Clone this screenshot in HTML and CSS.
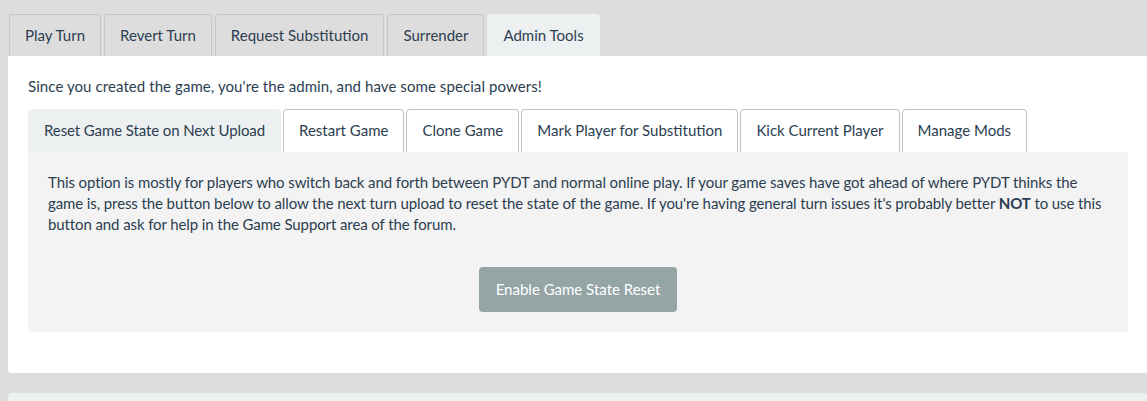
FILE: index.html
```html
<!DOCTYPE html>
<html lang="en">
<head>
  <meta charset="UTF-8">
  <meta name="viewport" content="width=device-width, initial-scale=1.0">
  <title>Game</title>
  <link rel="stylesheet" href="styles.css">
</head>
<body>
  <div class="page">
    <ul class="tabs top-tabs">
      <li><a>Play Turn</a></li>
      <li><a>Revert Turn</a></li>
      <li><a>Request Substitution</a></li>
      <li><a>Surrender</a></li>
      <li class="active"><a>Admin Tools</a></li>
    </ul>
    <div class="panel">
      <p class="intro">Since you created the game, you're the admin, and have some special powers!</p>
      <ul class="tabs inner-tabs">
        <li class="active"><a>Reset Game State on Next Upload</a></li>
        <li><a>Restart Game</a></li>
        <li><a>Clone Game</a></li>
        <li><a>Mark Player for Substitution</a></li>
        <li><a>Kick Current Player</a></li>
        <li><a>Manage Mods</a></li>
      </ul>
      <div class="tab-content">
        <p>This option is mostly for players who switch back and forth between PYDT and normal online play. If your game saves have got ahead of where PYDT thinks the game is, press the button below to allow the next turn upload to reset the state of the game. If you're having general turn issues it's probably better <strong>NOT</strong> to use this button and ask for help in the Game Support area of the forum.</p>
        <div class="actions">
          <button class="btn">Enable Game State Reset</button>
        </div>
      </div>
    </div>
    <div class="panel next"></div>
  </div>
</body>
</html>
```

FILE: styles.css
```css
html, body {
  overflow: hidden;
}
body {
  margin: 0;
  background: #dddddd;
  font-family: Lato, "Open Sans", sans-serif;
  font-size: 15px;
  line-height: 21px;
  color: #2c3e50;
}
.page {
  width: 1140px;
  padding: 14px 0 0 8px;
}
.tabs {
  list-style: none;
  margin: 0;
  padding: 0;
  display: flex;
}
.tabs li {
  margin-right: 3px;
}
.tabs a {
  display: block;
  padding: 10px 15px;
  border: 1px solid #c6c6c6;
  border-bottom: none;
  border-radius: 4px 4px 0 0;
}
.top-tabs {
  padding-left: 1px;
}
.top-tabs a {
  background: #dddddd;
}
.inner-tabs li {
  margin-right: 2px;
}
.inner-tabs a {
  background: #fff;
  padding-bottom: 11px;
  border-color: #c4c4c4;
}
.inner-tabs .active a {
  letter-spacing: -0.1px;
}
.tabs .active a {
  background: #ecf0f1;
  border-color: #ecf0f1;
}
.panel {
  background: #fff;
  padding: 20px 20px 41px;
  border-radius: 0 4px 4px 4px;
}
.intro {
  margin: 0 0 12px;
  letter-spacing: 0.08px;
}
.tab-content {
  background: #f3f3f3;
  padding: 20px;
  border-radius: 0 0 4px 4px;
}
.tab-content p {
  margin: 0;
  letter-spacing: -0.1px;
}
.actions {
  display: flex;
  justify-content: center;
  margin-top: 32px;
}
.btn {
  font-family: inherit;
  font-size: 15px;
  line-height: 21px;
  color: #fff;
  background: #95a5a6;
  border: none;
  border-radius: 4px;
  padding: 12px 17px;
}
.panel.next {
  margin-top: 20px;
  background: #ecf0f1;
  height: 40px;
  padding: 0;
  border-radius: 4px;
}
```
